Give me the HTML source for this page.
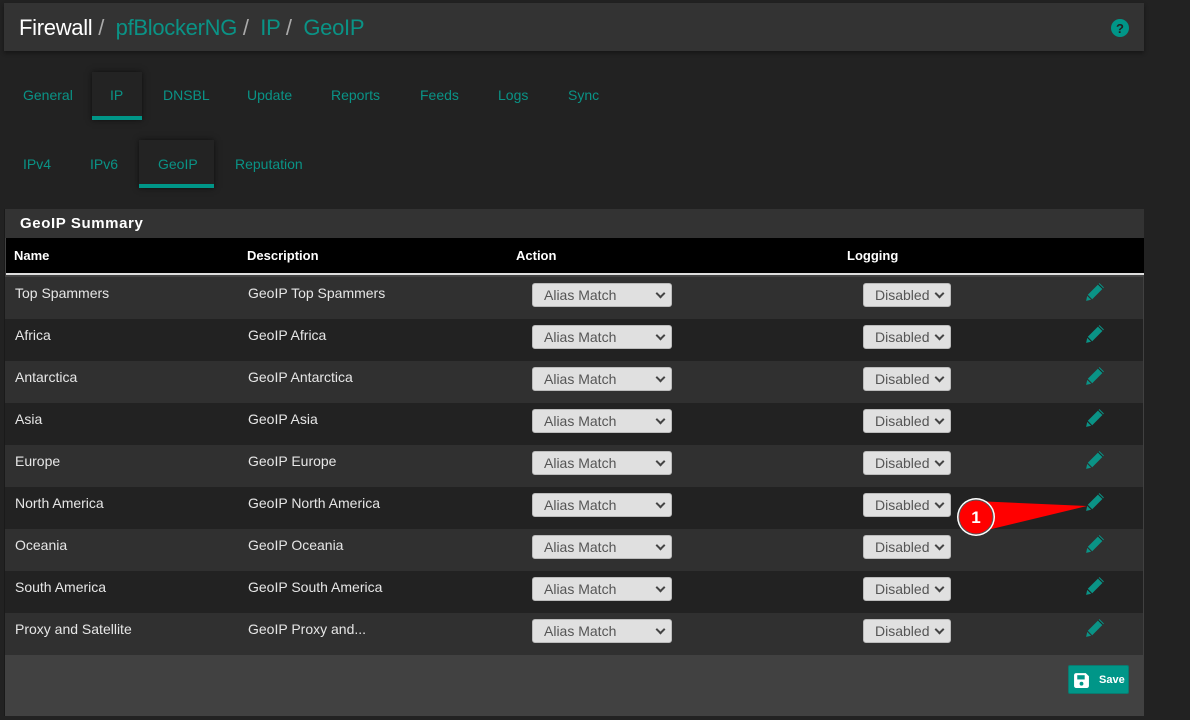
<!DOCTYPE html>
<html><head><style>
*{box-sizing:border-box;margin:0;padding:0}
body{width:1190px;height:720px;background:#222;font-family:"Liberation Sans",sans-serif;position:relative;overflow:hidden}
.abs{position:absolute}
.hdr{left:4px;top:3px;width:1140px;height:48px;background:#333;box-shadow:0 2px 4px rgba(0,0,0,.4)}
.hdr .t{position:absolute;left:15px;top:12px;font-size:22px;color:#fff;white-space:nowrap;letter-spacing:-.3px}
.hdr .t span.l{color:#0a9386}.hdr .t span.s{color:#aaa}
.tab{position:absolute;font-size:14px;color:#0a9386}
.act{position:absolute;background:#232323;box-shadow:0 0 6px rgba(0,0,0,.6);border-bottom:4px solid #009688}
.panel{left:4px;top:209px;width:1140px;height:507px;background:#414141;border-left:1px solid #1a1a1a}
.ph{position:absolute;left:0;top:0;width:100%;height:29px;background:#333;color:#fff;font-weight:bold;font-size:15px;padding:6px 0 0 15px;letter-spacing:.6px}
.th{position:absolute;left:1px;top:29px;width:1138px;height:37px;background:#000;border-bottom:2px solid #ddd}
.th span{position:absolute;top:10px;color:#fff;font-weight:bold;font-size:13px}
.row{position:absolute;left:1px;width:1138px;height:42px;color:#e6e6e6;font-size:14px}
.row span{position:absolute;top:8px}
.sel{position:absolute;top:6px;height:24px;background:#e0e0e0;border:1px solid #bbb;border-radius:3px;color:#555;font-size:14px;padding:3px 0 0 11px}
.sel:after{content:"";position:absolute;right:7px;top:6px;width:5px;height:5px;border-right:2px solid #444;border-bottom:2px solid #444;transform:rotate(45deg)}
.pen{position:absolute;left:1080px;top:5px}
</style></head><body>
<div class="abs hdr"><div class="t">Firewall <span class="s">/</span>&nbsp; <span class="l">pfBlockerNG</span> <span class="s">/</span>&nbsp; <span class="l">IP</span> <span class="s">/</span>&nbsp; <span class="l">GeoIP</span></div>
<svg style="position:absolute;left:1107px;top:16px" width="18" height="18" viewBox="0 0 18 18"><circle cx="9" cy="9" r="9" fill="#009688"/><text x="9" y="14" text-anchor="middle" font-family="Liberation Sans" font-weight="bold" font-size="13" fill="#222">?</text></svg></div>
<div class="act" style="left:92px;top:72px;width:50px;height:48px"></div>
<div class="act" style="left:139px;top:140px;width:75px;height:48px"></div>
<div class="tab" style="left:23px;top:87px">General</div>
<div class="tab" style="left:110px;top:87px">IP</div>
<div class="tab" style="left:163px;top:87px">DNSBL</div>
<div class="tab" style="left:247px;top:87px">Update</div>
<div class="tab" style="left:331px;top:87px">Reports</div>
<div class="tab" style="left:420px;top:87px">Feeds</div>
<div class="tab" style="left:498px;top:87px">Logs</div>
<div class="tab" style="left:568px;top:87px">Sync</div>
<div class="tab" style="left:23px;top:156px">IPv4</div>
<div class="tab" style="left:90px;top:156px">IPv6</div>
<div class="tab" style="left:158px;top:156px">GeoIP</div>
<div class="tab" style="left:235px;top:156px">Reputation</div>
<div class="abs panel">
<div class="ph">GeoIP Summary</div>
<div class="th"><span style="left:8px">Name</span><span style="left:241px">Description</span><span style="left:510px">Action</span><span style="left:841px">Logging</span></div>
</div>
<div id="rows"></div>
<div class="abs" style="left:1068px;top:665px;width:61px;height:29px;background:#009688;border:1px solid #0b7a6f;border-radius:2px;color:#fff;font-size:11px;font-weight:bold">
<svg style="position:absolute;left:4px;top:6px" width="17" height="17" viewBox="0 0 16 16"><path d="M1 3a2 2 0 0 1 2-2h9l3 3v9a2 2 0 0 1-2 2H3a2 2 0 0 1-2-2z" fill="#fff"/><rect x="4" y="3" width="7" height="4" fill="#009688"/><circle cx="8" cy="11" r="1.8" fill="#009688"/></svg>
<span style="position:absolute;left:30px;top:8px">Save</span></div>
<svg class="abs" style="left:955px;top:497px" width="135" height="42" viewBox="0 0 135 42"><polygon points="20,4 132,9 20,36" fill="#f00"/><circle cx="21" cy="20" r="19" fill="#fff"/><circle cx="21" cy="20" r="17.5" fill="#555"/><circle cx="21" cy="20" r="16.5" fill="#f00"/><text x="21" y="26" text-anchor="middle" font-family="Liberation Sans" font-weight="bold" font-size="17" fill="#fff">1</text></svg>
<script>
var d=[["Top Spammers","GeoIP Top Spammers"],["Africa","GeoIP Africa"],["Antarctica","GeoIP Antarctica"],["Asia","GeoIP Asia"],["Europe","GeoIP Europe"],["North America","GeoIP North America"],["Oceania","GeoIP Oceania"],["South America","GeoIP South America"],["Proxy and Satellite","GeoIP Proxy and..."]];
var h="";d.forEach(function(r,i){h+='<div class="row" style="top:'+(277+42*i)+'px;left:5px;background:'+(i%2?'#222':'#303030')+'"><span style="left:10px">'+r[0]+'</span><span style="left:243px">'+r[1]+'</span><div class="sel" style="left:527px;width:140px">Alias Match</div><div class="sel" style="left:858px;width:88px">Disabled</div><svg class="pen" width="20" height="20" viewBox="0 0 18 18"><path d="M13 1l4 4-10.5 10.5-4 -4z" fill="#0a9386"/><path d="M2 12.5l3.5 3.5L1 17z" fill="#0a9386"/><path d="M12 2l4 4" stroke="#222" stroke-width="1"/></svg></div>'});
document.getElementById("rows").innerHTML=h;
</script>
</body></html>
